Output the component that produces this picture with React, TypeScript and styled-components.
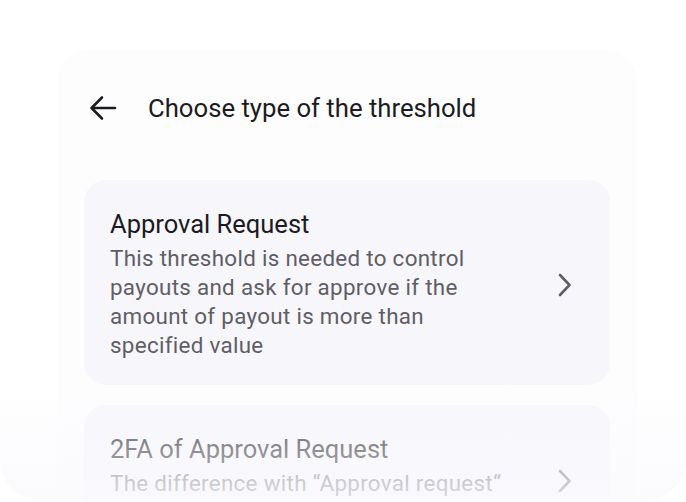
import styled, { createGlobalStyle } from "styled-components";

const GlobalStyle = createGlobalStyle`
  body {
    margin: 0;
    background: #ffffff;
    font-family: Roboto, "Liberation Sans", sans-serif;
  }
`;

const Page = styled.div`
  position: relative;
  width: 686px;
  height: 502px;
  overflow: hidden;
  background: #ffffff;
`;

const Screen = styled.div`
  margin: 50px 0 0 57px;
  width: 580px;
  height: 450px;
  overflow: hidden;
  padding: 0 27px;
  box-sizing: border-box;
  background: #fdfdfe;
  border-radius: 32px 32px 0 0;
`;

const Header = styled.div`
  display: flex;
  align-items: center;
  height: 116px;
  padding-left: 5px;
  gap: 31px;
`;

const BackButton = styled.button`
  display: flex;
  align-items: center;
  justify-content: center;
  width: 28px;
  height: 28px;
  padding: 0;
  border: none;
  background: none;
  color: #1c1b1f;
`;

const Title = styled.h1`
  margin: 0;
  font-size: 25.7px;
  font-weight: 400;
  color: #1c1b1f;
`;

const List = styled.div`
  display: flex;
  flex-direction: column;
  gap: 20px;
  margin-top: 14px;
`;

const Card = styled.div`
  display: flex;
  align-items: center;
  padding: 29px 38px 25px 26px;
  background: #f7f6fb;
  border-radius: 22px;
`;

const CardText = styled.div`
  flex: 1;
  display: flex;
  flex-direction: column;
  gap: 5px;
`;

const CardTitle = styled.div`
  font-size: 25.5px;
  line-height: 30px;
  color: #1c1b1f;
`;

const CardDesc = styled.div`
  width: 402px;
  font-size: 22.4px;
  line-height: 29px;
  letter-spacing: 0.3px;
  color: #5f5e66;
`;

const Fade = styled.div`
  position: absolute;
  left: 0;
  right: 0;
  top: 388px;
  bottom: 2px;
  border-radius: 0 0 40px 40px;
  background: linear-gradient(
    to bottom,
    rgba(250, 249, 253, 0) 0%,
    rgba(250, 249, 253, 0.45) 45%,
    rgba(250, 249, 253, 0.8) 100%
  );
  pointer-events: none;
`;

const Arrow = () => (
  <svg width="28" height="28" viewBox="0 0 28 28" fill="none">
    <path d="M26 14H3M13 3.5L2.5 14L13 24.5" stroke="currentColor" strokeWidth="2.6" strokeLinecap="round" strokeLinejoin="round" />
  </svg>
);

const Chevron = () => (
  <svg width="14" height="24" viewBox="0 0 14 24" fill="none">
    <path d="M2 2L11.5 12L2 22" stroke="#5f5e66" strokeWidth="2.6" strokeLinecap="round" strokeLinejoin="round" />
  </svg>
);

const options = [
  {
    title: "Approval Request",
    desc: "This threshold is needed to control payouts and ask for approve if the amount of payout is more than specified value",
  },
  {
    title: "2FA of Approval Request",
    desc: "The difference with \u201CApproval request\u201C is 2FA",
  },
];

export default function App() {
  return (
    <Page>
      <GlobalStyle />
      <Screen>
        <Header>
          <BackButton>
            <Arrow />
          </BackButton>
          <Title>Choose type of the threshold</Title>
        </Header>
        <List>
          {options.map((o) => (
            <Card key={o.title}>
              <CardText>
                <CardTitle>{o.title}</CardTitle>
                <CardDesc>{o.desc}</CardDesc>
              </CardText>
              <Chevron />
            </Card>
          ))}
        </List>
      </Screen>
      <Fade />
    </Page>
  );
}
